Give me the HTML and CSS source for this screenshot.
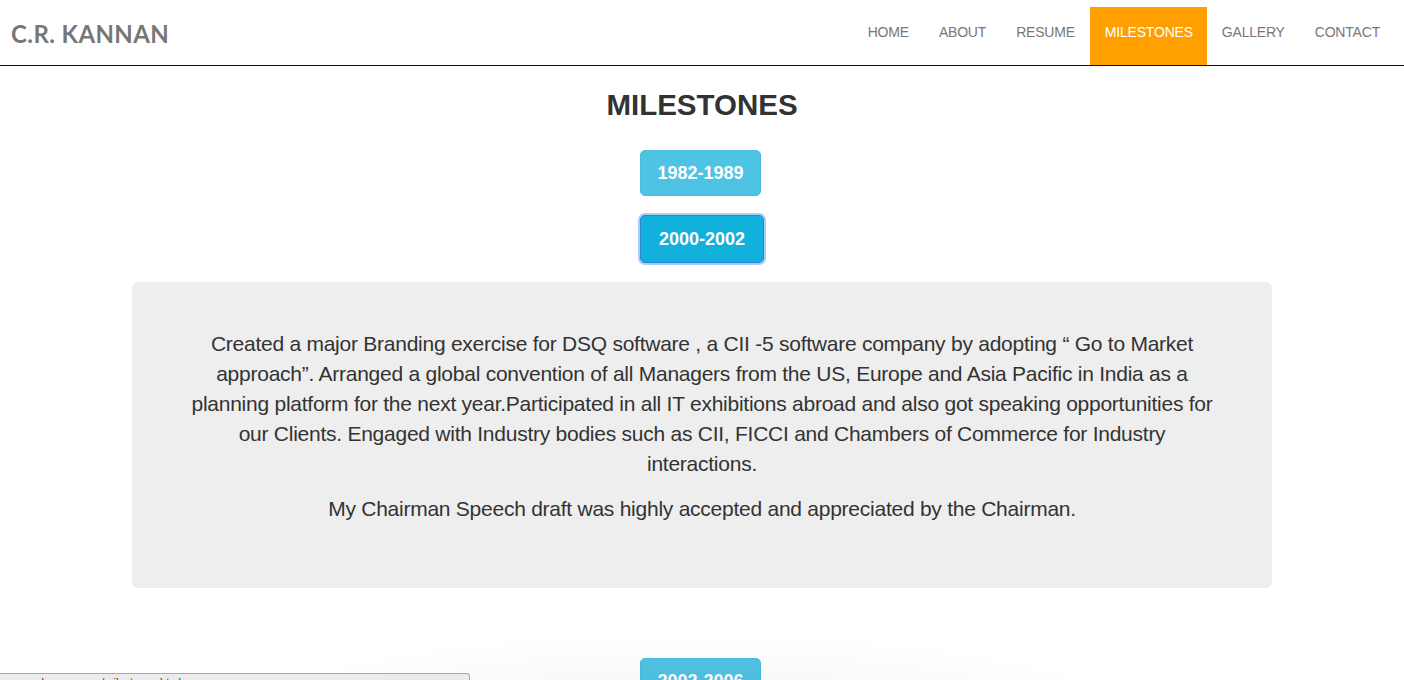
FILE: index.html
```html
<!DOCTYPE html>
<html>
<head>
<meta charset="utf-8">
<link rel="stylesheet" href="styles.css">
</head>
<body>
<header class="navbar">
  <div class="brand">C.R. KANNAN</div>
  <nav class="nav">
    <a class="nav-item">HOME</a>
    <a class="nav-item">ABOUT</a>
    <a class="nav-item">RESUME</a>
    <a class="nav-item active">MILESTONES</a>
    <a class="nav-item">GALLERY</a>
    <a class="nav-item">CONTACT</a>
  </nav>
</header>
<main class="content">
  <h1 class="title">MILESTONES</h1>
  <button class="btn btn-first">1982-1989</button>
  <button class="btn btn-focus">2000-2002</button>
  <div class="panel">
    <p>Created a major Branding exercise for DSQ software , a CII -5 software company by adopting “ Go to Market approach”. Arranged a global convention of all Managers from the US, Europe and Asia Pacific in India as a planning platform for the next year.Participated in all IT exhibitions abroad and also got speaking opportunities for our Clients. Engaged with Industry bodies such as CII, FICCI and Chambers of Commerce for Industry interactions.</p>
    <p>My Chairman Speech draft was highly accepted and appreciated by the Chairman.</p>
  </div>
  <button class="btn btn-next">2002-2006</button>
</main>
<div class="shade"></div>
<div class="status"><span>www.crkannan.com/milestones.html</span></div>
</body>
</html>
```
FILE: styles.css
```css
html, body {
  margin: 0;
  padding: 0;
  background: #fff;
  overflow: hidden;
  height: 680px;
}
body {
  font-family: "Liberation Sans", Arial, sans-serif;
  color: #333;
  position: relative;
}
.navbar {
  height: 65px;
  border-bottom: 1px solid #111;
  display: flex;
  justify-content: space-between;
  align-items: stretch;
}
.brand {
  font-family: "Lato", "Open Sans", sans-serif;
  font-weight: 700;
  font-size: 24px;
  color: #777;
  padding-left: 11px;
  padding-top: 19px;
  letter-spacing: 0.4px;
}
.nav {
  display: flex;
  padding-top: 7px;
  padding-right: 9px;
}
.nav-item {
  font-size: 14px;
  color: #777;
  padding: 17px 15px 0 15px;
  letter-spacing: -0.2px;
}
.nav-item.active {
  background: #ff9f00;
  color: #fff;
  padding-left: 15px;
  padding-right: 14px;
}
.content {
  display: flex;
  flex-direction: column;
  align-items: center;
}
.title {
  margin: 23px 0 0 0;
  font-size: 29.5px;
  font-weight: 700;
  color: #333;
  line-height: 32px;
}
.btn {
  font-family: "Liberation Sans", Arial, sans-serif;
  font-size: 18px;
  font-weight: 700;
  color: #fff;
  background: #4fc3e4;
  border: 1px solid #46bde0;
  border-radius: 5px;
  width: 121px;
  height: 46px;
  padding: 0;
  margin-top: 29px;
}
.btn-first {
  margin-right: 3px;
}
.btn-focus {
  margin-top: 19px;
  width: 124px;
  height: 48px;
  background: #12b1dc;
  border: 1px solid #2a85d0;
  box-shadow: 0 0 0 2px #a9cdfb;
}
.panel {
  width: 1030px;
  margin-top: 19px;
  background: #eee;
  border-radius: 6px;
  padding: 47px 55px 49px 55px;
  text-align: center;
  font-size: 21px;
  line-height: 30px;
  color: #333;
}
.panel p {
  margin: 0 0 15px 0;
  letter-spacing: -0.25px;
}
.btn-next {
  margin-top: 70px;
  margin-right: 3px;
}
.shade {
  position: absolute;
  left: 200px;
  width: 980px;
  top: 630px;
  height: 100px;
  background: radial-gradient(ellipse at 50% 100%, rgba(0,0,0,0.05), rgba(0,0,0,0) 70%);
  pointer-events: none;
}
.status {
  position: absolute;
  left: 0;
  top: 673px;
  width: 470px;
  height: 20px;
  background: #ebebeb;
  border: 1px solid #a8a8a8;
  border-left: none;
  border-radius: 0 3px 0 0;
  font-size: 11px;
  color: #333;
  padding-left: 6px;
  box-sizing: border-box;
  line-height: 16px;
}
```
